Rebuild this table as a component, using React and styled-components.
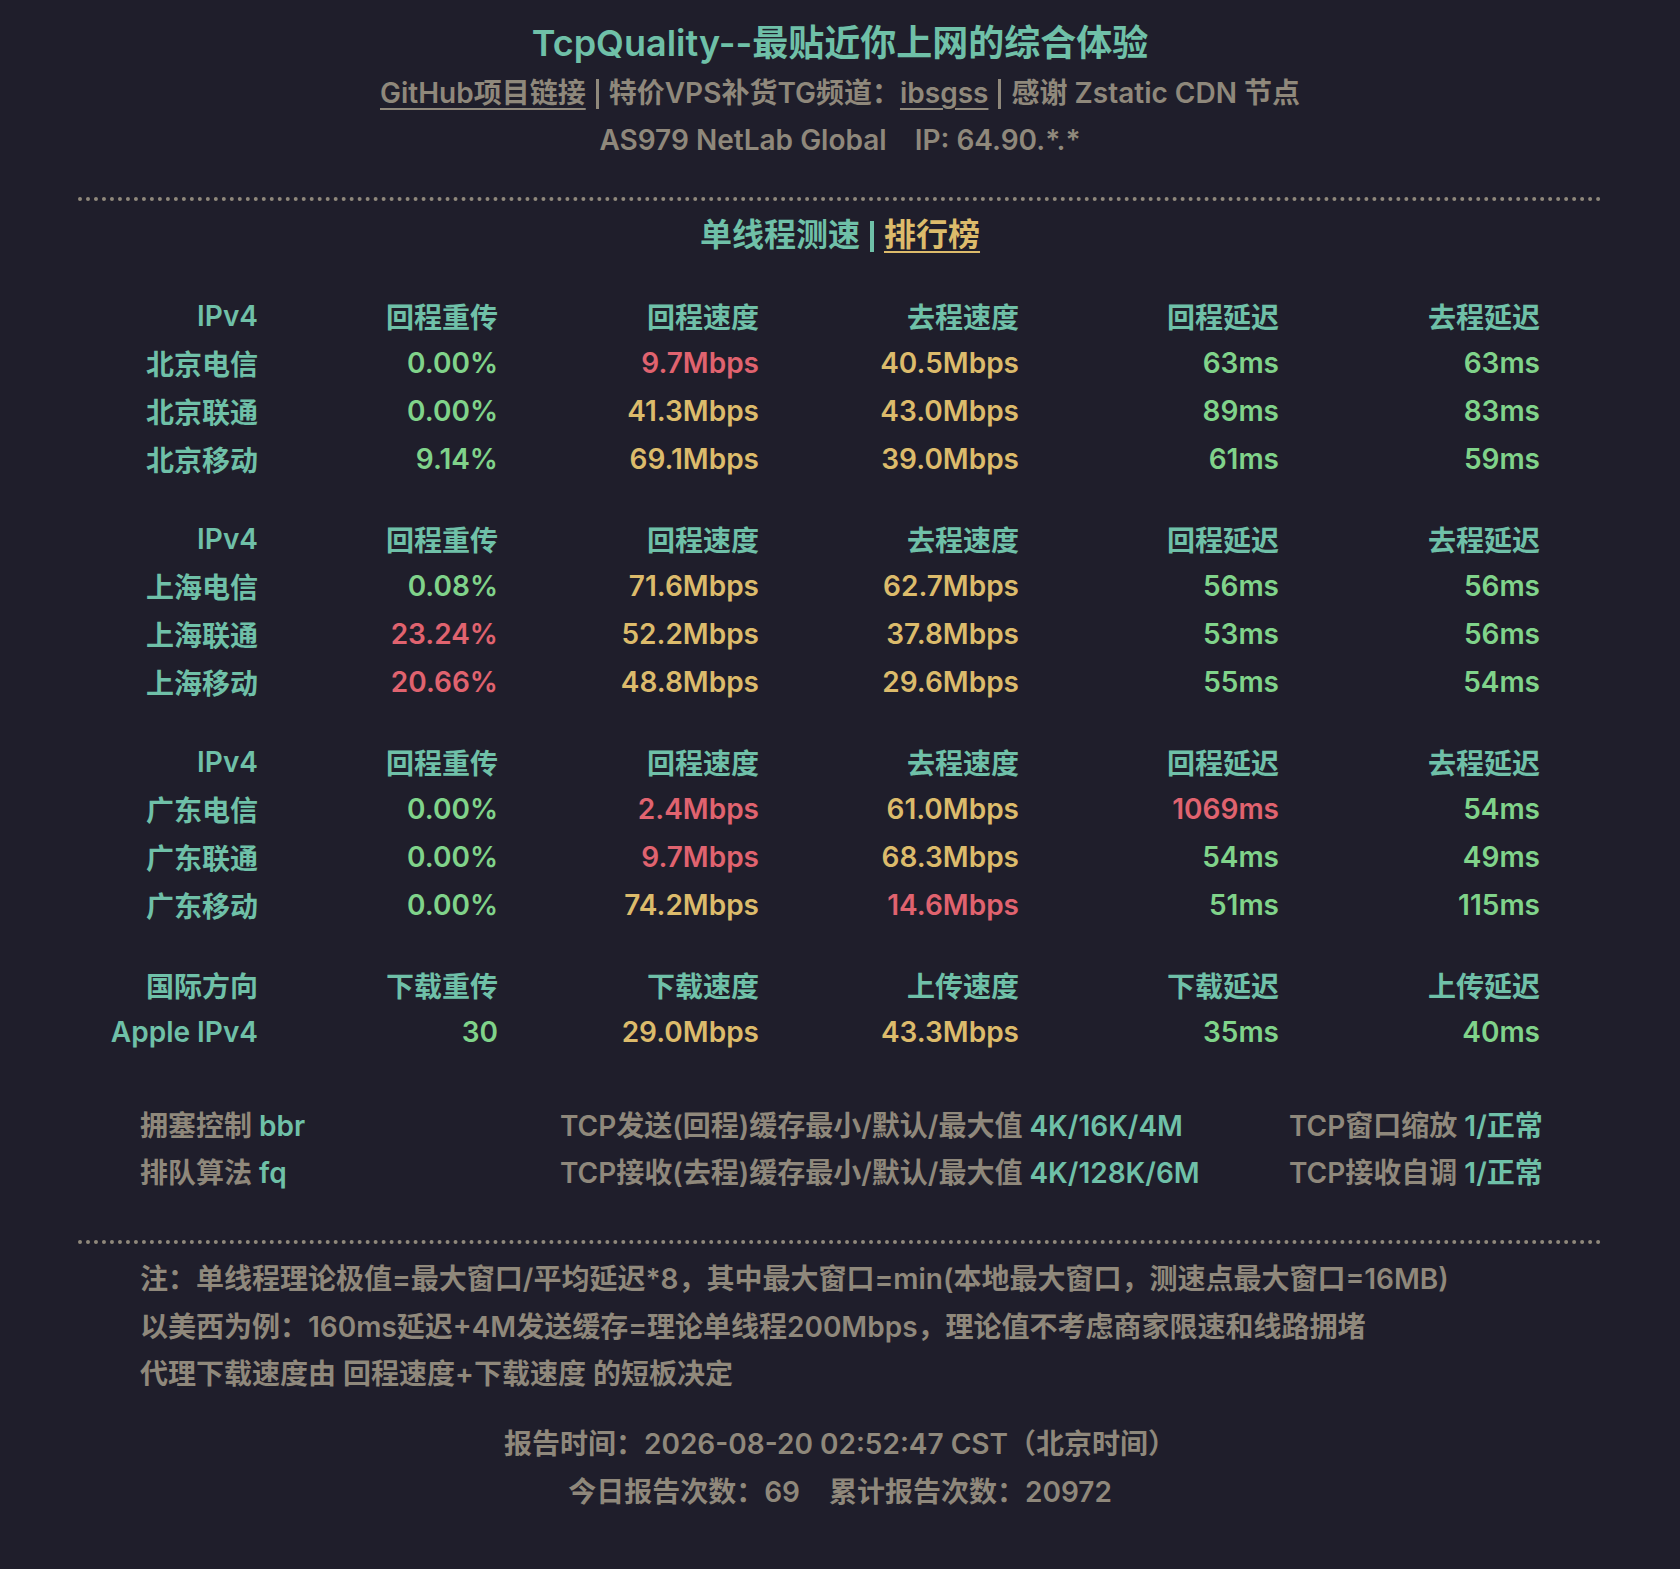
import React from "react";
import styled, { createGlobalStyle } from "styled-components";

const C = {
  bg: "#1f1e2b",
  teal: "#6fc0a8",
  green: "#80d38a",
  gold: "#dcbb6b",
  red: "#e0636f",
  gray: "#8f887b",
};

const GlobalStyle = createGlobalStyle`
  html, body { margin: 0; padding: 0; background: ${C.bg}; }
  body {
    font-family: Inter, "Noto Sans CJK SC", "Noto Sans", sans-serif;
    font-weight: 600;
    -webkit-font-smoothing: antialiased;
  }
`;

const Page = styled.div`
  width: 1680px;
  min-height: 1569px;
  box-sizing: border-box;
  padding: 16px 78px 0;
  background: ${C.bg};
`;

const Header = styled.header`
  text-align: center;
`;

const Title = styled.h1`
  margin: 0;
  font-size: 36px;
  line-height: 54px;
  font-weight: 600;
  color: ${C.teal};
`;

const SubLine = styled.div`
  font-size: 28px;
  line-height: 47px;
  color: ${C.gray};
  white-space: pre;
`;

const Link = styled.a`
  color: ${(p) => p.$color || C.gray};
  text-decoration: underline;
  text-decoration-thickness: 2px;
  text-underline-offset: 5px;
`;

const Bar = styled.span`
  display: inline-block;
  width: ${(p) => p.$w || 3}px;
  height: ${(p) => p.$h || 30}px;
  margin: 0 ${(p) => p.$m || 10}px;
  vertical-align: ${(p) => p.$va || -6}px;
  background: ${(p) => p.$color || C.gray};
`;

const Divider = styled.div`
  border-top: 4px dotted ${C.gray};
  margin-top: ${(p) => p.$mt}px;
`;

const SectionTitle = styled.div`
  margin-top: 10px;
  text-align: center;
  font-size: 32px;
  line-height: 48px;
  color: ${C.teal};
`;

const Table = styled.div`
  margin-top: 33px;
`;

const Group = styled.div`
  display: grid;
  grid-template-columns: 180px 240px 261px 260px 260px 261px;
  grid-auto-rows: 47.6px;
  align-items: center;
  font-size: 28px;
  & + & {
    margin-top: 32.6px;
  }
`;

const Cell = styled.div`
  text-align: right;
  white-space: nowrap;
  color: ${(p) => p.$color || C.teal};
`;

const Config = styled.div`
  margin-top: 44px;
  padding-left: 62px;
  display: grid;
  grid-template-columns: 420px 729px auto;
  grid-auto-rows: 47px;
  align-items: center;
  font-size: 28px;
  color: ${C.gray};
`;

const Item = styled.div`
  white-space: nowrap;
`;

const Val = styled.span`
  color: ${C.teal};
`;

const Notes = styled.div`
  margin-top: 12px;
  padding-left: 62px;
  font-size: 28px;
  line-height: 47.6px;
  color: ${C.gray};
`;

const Footer = styled.div`
  margin-top: 21px;
  text-align: center;
  font-size: 28px;
  line-height: 48px;
  color: ${C.gray};
  white-space: pre;
`;

const Space = styled.span`
  display: inline-block;
  width: ${(p) => p.$w}px;
`;

const G = C.green, Y = C.gold, R = C.red;

const groups = [
  {
    head: ["IPv4", "回程重传", "回程速度", "去程速度", "回程延迟", "去程延迟"],
    rows: [
      ["北京电信", ["0.00%", G], ["9.7Mbps", R], ["40.5Mbps", Y], ["63ms", G], ["63ms", G]],
      ["北京联通", ["0.00%", G], ["41.3Mbps", Y], ["43.0Mbps", Y], ["89ms", G], ["83ms", G]],
      ["北京移动", ["9.14%", G], ["69.1Mbps", Y], ["39.0Mbps", Y], ["61ms", G], ["59ms", G]],
    ],
  },
  {
    head: ["IPv4", "回程重传", "回程速度", "去程速度", "回程延迟", "去程延迟"],
    rows: [
      ["上海电信", ["0.08%", G], ["71.6Mbps", Y], ["62.7Mbps", Y], ["56ms", G], ["56ms", G]],
      ["上海联通", ["23.24%", R], ["52.2Mbps", Y], ["37.8Mbps", Y], ["53ms", G], ["56ms", G]],
      ["上海移动", ["20.66%", R], ["48.8Mbps", Y], ["29.6Mbps", Y], ["55ms", G], ["54ms", G]],
    ],
  },
  {
    head: ["IPv4", "回程重传", "回程速度", "去程速度", "回程延迟", "去程延迟"],
    rows: [
      ["广东电信", ["0.00%", G], ["2.4Mbps", R], ["61.0Mbps", Y], ["1069ms", R], ["54ms", G]],
      ["广东联通", ["0.00%", G], ["9.7Mbps", R], ["68.3Mbps", Y], ["54ms", G], ["49ms", G]],
      ["广东移动", ["0.00%", G], ["74.2Mbps", Y], ["14.6Mbps", R], ["51ms", G], ["115ms", G]],
    ],
  },
  {
    head: ["国际方向", "下载重传", "下载速度", "上传速度", "下载延迟", "上传延迟"],
    rows: [
      ["Apple IPv4", ["30", G], ["29.0Mbps", Y], ["43.3Mbps", Y], ["35ms", G], ["40ms", G]],
    ],
  },
];

export default function App() {
  return (
    <>
      <GlobalStyle />
      <Page>
        <Header>
          <Title>TcpQuality--最贴近你上网的综合体验</Title>
          <SubLine>
            <Link href="#">GitHub项目链接</Link>
            <Bar />
            特价VPS补货TG频道：<Link href="#">ibsgss</Link>
            <Bar />
            感谢 Zstatic CDN 节点
          </SubLine>
          <SubLine>
            AS979 NetLab Global<Space $w={28} />IP: 64.90.*.*
          </SubLine>
        </Header>

        <Divider $mt={33} />

        <SectionTitle>
          单线程测速
          <Bar $color={C.teal} $w={4} $h={31} $m={10} $va={-6} />
          <Link href="#" $color={C.gold}>排行榜</Link>
        </SectionTitle>

        <Table>
          {groups.map((g, gi) => (
            <Group key={gi}>
              {g.head.map((h, i) => (
                <Cell key={"h" + i}>{h}</Cell>
              ))}
              {g.rows.map((r, ri) => (
                <React.Fragment key={ri}>
                  <Cell>{r[0]}</Cell>
                  {r.slice(1).map(([v, c], ci) => (
                    <Cell key={ci} $color={c}>{v}</Cell>
                  ))}
                </React.Fragment>
              ))}
            </Group>
          ))}
        </Table>

        <Config>
          <Item>拥塞控制 <Val>bbr</Val></Item>
          <Item>TCP发送(回程)缓存最小/默认/最大值 <Val>4K/16K/4M</Val></Item>
          <Item>TCP窗口缩放 <Val>1/正常</Val></Item>
          <Item>排队算法 <Val>fq</Val></Item>
          <Item>TCP接收(去程)缓存最小/默认/最大值 <Val>4K/128K/6M</Val></Item>
          <Item>TCP接收自调 <Val>1/正常</Val></Item>
        </Config>

        <Divider $mt={46} />

        <Notes>
          <div>注：单线程理论极值=最大窗口/平均延迟*8，其中最大窗口=min(本地最大窗口，测速点最大窗口=16MB)</div>
          <div>以美西为例：160ms延迟+4M发送缓存=理论单线程200Mbps，理论值不考虑商家限速和线路拥堵</div>
          <div>代理下载速度由 回程速度+下载速度 的短板决定</div>
        </Notes>

        <Footer>
          <div>报告时间：2026-08-20 02:52:47 CST（北京时间）</div>
          <div>
            今日报告次数：69<Space $w={29} />累计报告次数：20972
          </div>
        </Footer>
      </Page>
    </>
  );
}
